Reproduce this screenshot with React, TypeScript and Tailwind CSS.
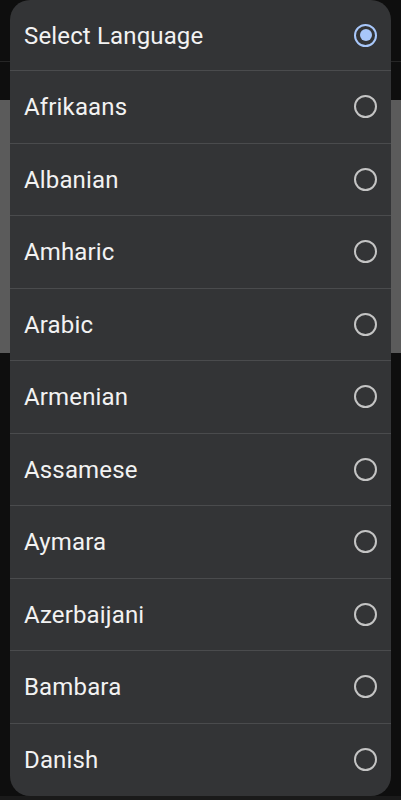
import React from "react";

const languages = [
  "Afrikaans",
  "Albanian",
  "Amharic",
  "Arabic",
  "Armenian",
  "Assamese",
  "Aymara",
  "Azerbaijani",
  "Bambara",
  "Danish",
];

function Radio({ checked }: { checked?: boolean }) {
  if (checked) {
    return (
      <div className="w-[23px] h-[23px] rounded-full border-[2px] border-[#a8c7fa] flex items-center justify-center">
        <div className="w-[12px] h-[12px] rounded-full bg-[#a8c7fa]" />
      </div>
    );
  }
  return <div className="w-[23px] h-[23px] rounded-full border-[2px] border-[#c4c4c4]" />;
}

export default function App() {
  return (
    <div
      className="relative w-full h-[800px] bg-[#0e0e0e] overflow-hidden"
      style={{ fontFamily: "Roboto, 'Noto Sans', sans-serif" }}
    >
      {/* background page behind the dialog */}
      <div className="absolute inset-x-0 top-[61px] h-px bg-[#262626]" />
      <div className="absolute inset-x-0 top-[100px] h-[253px] bg-[#5b5b5b]" />
      <div className="absolute inset-x-0 top-[796px] h-[4px] bg-[#1a1a1a]" />

      <div className="relative mx-[10px] h-[796px] rounded-[20px] bg-[#333436] flex flex-col overflow-hidden">
        <div className="h-[70px] flex items-center justify-between pl-[14px] pr-[14px]">
          <span className="text-[24px] leading-none pt-[1px] tracking-[0.15px] text-[#f2f2f2]">Select Language</span>
          <Radio checked />
        </div>
        {languages.map((l) => (
          <div
            key={l}
            className="h-[72.5px] border-t border-[#4a4b4d] flex items-center justify-between pl-[14px] pr-[14px]"
          >
            <span className="text-[24px] leading-none pt-[1px] tracking-[0.15px] text-[#f2f2f2]">{l}</span>
            <Radio />
          </div>
        ))}
      </div>
    </div>
  );
}
